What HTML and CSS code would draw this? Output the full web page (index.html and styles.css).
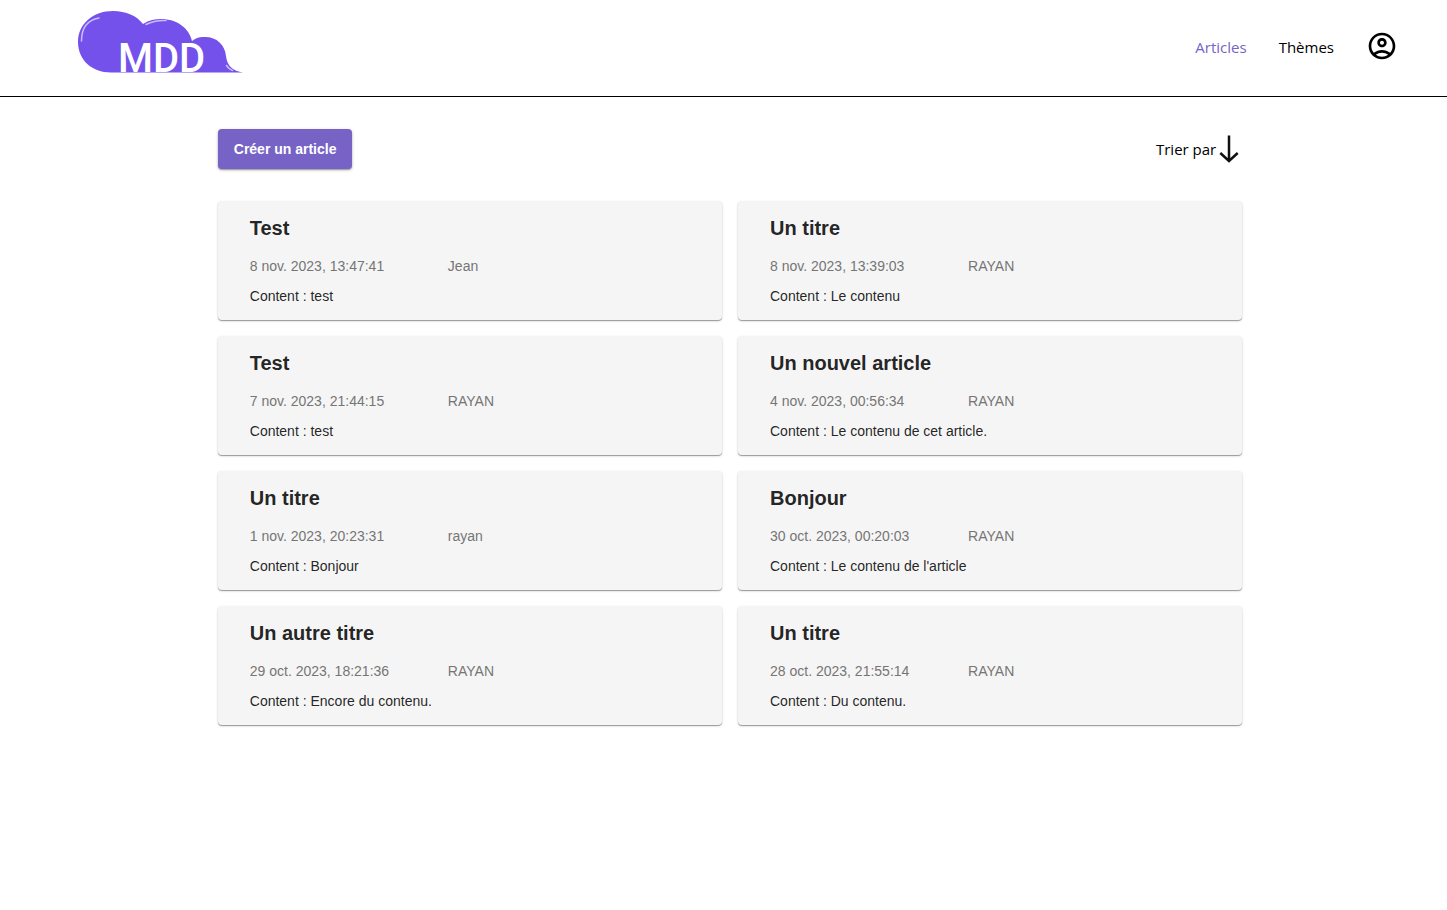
FILE: index.html
```html
<!DOCTYPE html>
<html lang="fr">
<head>
<meta charset="utf-8">
<title>MDD - Articles</title>
<link rel="stylesheet" href="styles.css">
</head>
<body>
<header class="header">
  <a class="logo" href="#" aria-label="MDD">
    <svg width="168" height="74" viewBox="0 0 168 74">
      <path fill="#7451eb" d="M34 62.500C15 62.500 1 50 1 32C1 14 16 1 36 1C49 1 60 6 66 14C72 10 78 9 84 9C100 9 112 18 115 31C120 27 124 27 128 27C140 27 148 35 149 46C150 56 156 61 166 62.500Z"/>
      <path fill="none" stroke="#c9bcf8" stroke-width="1.500" stroke-linecap="round" d="M4.500 31C4.500 18 11 10 22 8M69 14.500C76 11 81 10 89 10.500M149.500 55.500C151 58 153 59.500 155.500 60.500"/>
      <text class="logo-text" x="41" y="62">MDD</text>
    </svg>
  </a>
  <nav class="nav">
    <a class="nav-link active" href="#">Articles</a>
    <a class="nav-link" href="#">Thèmes</a>
    <a class="profile" href="#" aria-label="Profil">
      <svg width="32" height="32" viewBox="0 0 24 24"><path d="M12 2C6.480 2 2 6.480 2 12s4.480 10 10 10 10-4.480 10-10S17.520 2 12 2zM7.350 18.500C8.660 17.560 10.260 17 12 17s3.340.56 4.650 1.500C15.340 19.440 13.740 20 12 20s-3.340-.56-4.650-1.500zm10.790-1.380C16.450 15.800 14.320 15 12 15s-4.450.8-6.140 2.120C4.700 15.730 4 13.950 4 12c0-4.420 3.580-8 8-8s8 3.580 8 8c0 1.950-.7 3.730-1.860 5.120zM12 6c-1.930 0-3.500 1.570-3.500 3.500S10.070 13 12 13s3.500-1.570 3.500-3.500S13.930 6 12 6zm0 5c-.83 0-1.500-.67-1.500-1.500S11.170 8 12 8s1.500.67 1.500 1.500S12.830 11 12 11z"/></svg>
    </a>
  </nav>
</header>
<main class="main">
  <div class="toolbar">
    <button class="create" type="button">Créer un article</button>
    <button class="sort" type="button">Trier par
      <svg width="20" height="28" viewBox="0 0 20 28"><path fill="none" stroke="#111" stroke-width="2.500" d="M10 0.500V26M1.300 18L10 26L18.700 18"/></svg>
    </button>
  </div>
  <div class="articles">
    <article class="card"><h2 class="title">Test</h2><div class="meta"><span>8 nov. 2023, 13:47:41</span><span>Jean</span></div><p class="content">Content : test</p></article>
    <article class="card"><h2 class="title">Un titre</h2><div class="meta"><span>8 nov. 2023, 13:39:03</span><span>RAYAN</span></div><p class="content">Content : Le contenu</p></article>
    <article class="card"><h2 class="title">Test</h2><div class="meta"><span>7 nov. 2023, 21:44:15</span><span>RAYAN</span></div><p class="content">Content : test</p></article>
    <article class="card"><h2 class="title">Un nouvel article</h2><div class="meta"><span>4 nov. 2023, 00:56:34</span><span>RAYAN</span></div><p class="content">Content : Le contenu de cet article.</p></article>
    <article class="card"><h2 class="title">Un titre</h2><div class="meta"><span>1 nov. 2023, 20:23:31</span><span>rayan</span></div><p class="content">Content : Bonjour</p></article>
    <article class="card"><h2 class="title">Bonjour</h2><div class="meta"><span>30 oct. 2023, 00:20:03</span><span>RAYAN</span></div><p class="content">Content : Le contenu de l'article</p></article>
    <article class="card"><h2 class="title">Un autre titre</h2><div class="meta"><span>29 oct. 2023, 18:21:36</span><span>RAYAN</span></div><p class="content">Content : Encore du contenu.</p></article>
    <article class="card"><h2 class="title">Un titre</h2><div class="meta"><span>28 oct. 2023, 21:55:14</span><span>RAYAN</span></div><p class="content">Content : Du contenu.</p></article>
  </div>
</main>
</body>
</html>
```
FILE: styles.css
```css
* {
  box-sizing: border-box;
}

body {
  margin: 0;
  background: #fff;
  color: #000;
  font-family: "Liberation Sans", Arial, sans-serif;
  font-size: 14px;
}

.header {
  display: flex;
  justify-content: space-between;
  align-items: flex-start;
  padding: 10px 49px 12px 77px;
  border-bottom: 1px solid #000;
}

.logo,
.logo svg {
  display: block;
}

.logo-text {
  fill: #fff;
  font-family: Roboto, sans-serif;
  font-size: 40px;
  font-weight: 500;
}

.nav {
  display: flex;
  align-items: flex-start;
  gap: 32px;
  padding-top: 20px;
}

.nav-link {
  color: #000;
  font-family: "Open Sans", "Noto Sans", sans-serif;
  font-size: 15px;
  line-height: 34px;
  text-decoration: none;
}

.nav-link.active {
  color: #7763c5;
}

.profile,
.profile svg {
  display: block;
}

.main {
  padding: 32px 14.150% 32px 15.050%;
}

.toolbar {
  display: flex;
  justify-content: space-between;
  align-items: center;
}

.create {
  height: 40px;
  padding: 0 16px;
  border: 0;
  border-radius: 4px;
  background: #7763c5;
  color: #fff;
  font: bold 14px "Liberation Sans", Arial, sans-serif;
  box-shadow: 0 1px 3px rgba(0, 0, 0, 0.3), 0 1px 1px rgba(0, 0, 0, 0.2);
}

.sort {
  display: flex;
  align-items: center;
  gap: 3px;
  padding: 0 3px 0 0;
  border: 0;
  background: none;
  color: #000;
  font: 15px "Open Sans", "Noto Sans", sans-serif;
}

.articles {
  display: grid;
  grid-template-columns: 1fr 1fr;
  gap: 16px;
  padding-top: 32px;
}

.card {
  padding: 11px 32px 14px;
  border-radius: 4px;
  background: #f5f5f5;
  box-shadow: 0 1px 1px rgba(0, 0, 0, 0.35), 0 1px 3px rgba(0, 0, 0, 0.12);
}

.title {
  margin: 0;
  color: rgba(0, 0, 0, 0.87);
  font-size: 20px;
  line-height: 32px;
}

.meta {
  display: grid;
  grid-template-columns: 45% 1fr;
  padding-top: 12px;
  color: #757575;
  line-height: 20px;
}

.content {
  margin: 0;
  padding-top: 10px;
  color: rgba(0, 0, 0, 0.87);
  line-height: 20px;
}
```
